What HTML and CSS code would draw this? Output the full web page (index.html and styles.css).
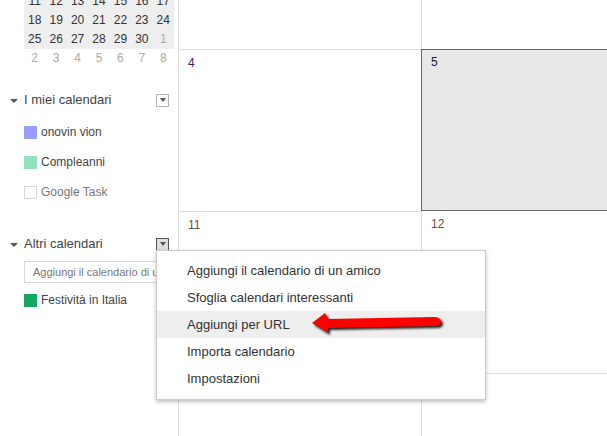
FILE: index.html
```html
<!DOCTYPE html>
<html lang="it">
<head>
<meta charset="utf-8">
<title>Calendario</title>
<link rel="stylesheet" href="styles.css">
</head>
<body>
<div class="app">
  <aside class="sidebar">
    <div class="mini">
      <div class="week in"><span>11</span><span>12</span><span>13</span><span>14</span><span>15</span><span>16</span><span>17</span></div>
      <div class="week in"><span>18</span><span>19</span><span>20</span><span>21</span><span>22</span><span>23</span><span>24</span></div>
      <div class="week in"><span>25</span><span>26</span><span>27</span><span>28</span><span>29</span><span>30</span><span class="out">1</span></div>
      <div class="week"><span class="out">2</span><span class="out">3</span><span class="out">4</span><span class="out">5</span><span class="out">6</span><span class="out">7</span><span class="out">8</span></div>
    </div>

    <section class="group first">
      <div class="group-head">
        <i class="caret"></i>
        <h2>I miei calendari</h2>
        <button class="drop" aria-label="Opzioni"><i class="drop-caret"></i></button>
      </div>
      <div class="cal-row"><i class="swatch blue"></i><span>onovin vion</span></div>
      <div class="cal-row"><i class="swatch green"></i><span>Compleanni</span></div>
      <div class="cal-row muted"><i class="swatch empty"></i><span>Google Task</span></div>
    </section>

    <section class="group second">
      <div class="group-head">
        <i class="caret"></i>
        <h2>Altri calendari</h2>
        <button class="drop active" aria-label="Opzioni"><i class="drop-caret"></i></button>
      </div>
      <input class="friend" type="text" placeholder="Aggiungi il calendario di un amico">
      <div class="cal-row holiday"><i class="swatch teal"></i><span>Festività in Italia</span></div>
    </section>
  </aside>

  <main class="month">
    <div class="cell"></div>
    <div class="cell"></div>
    <div class="cell"><span class="num purple">4</span></div>
    <div class="cell today"><span class="num dark">5</span></div>
    <div class="cell"><span class="num">11</span></div>
    <div class="cell after-today"><span class="num">12</span></div>
    <div class="cell"></div>
    <div class="cell"></div>
  </main>
</div>

<nav class="menu">
  <a>Aggiungi il calendario di un amico</a>
  <a>Sfoglia calendari interessanti</a>
  <a class="hover">Aggiungi per URL</a>
  <a>Importa calendario</a>
  <a>Impostazioni</a>
</nav>

<svg class="arrow" width="140" height="32" viewBox="0 0 140 32" aria-hidden="true">
  <defs>
    <filter id="blur" x="-10%" y="-40%" width="120%" height="180%"><feGaussianBlur stdDeviation="0.8"/></filter>
  </defs>
  <path class="arrow-shadow" filter="url(#blur)" d="M2 14 L15 4 L18 10 L125 8 Q131 8.500 131 13 Q131 17 125 17 L18 19 L18 24 Z"/>
  <path class="arrow-fill" d="M2 14 L15 4 L18 10 L125 8 Q131 8.500 131 13 Q131 17 125 17 L18 19 L18 24 Z"/>
</svg>
</body>
</html>
```
FILE: styles.css
```css
* { box-sizing: border-box; }

html, body {
  margin: 0;
  height: 100%;
  overflow: hidden;
  background: #fff;
}

body {
  position: relative;
  font-family: "Liberation Sans", Arial, sans-serif;
  font-size: 12px;
  color: #333;
}

.app {
  display: flex;
  height: 436px;
}

.sidebar {
  flex: 0 0 178px;
  overflow: hidden;
}

/* mini calendar */
.mini {
  margin: -8px 0 0 24px;
  width: 150px;
  font-size: 12px;
}

.week {
  display: grid;
  grid-template-columns: repeat(7, 1fr);
  height: 19px;
  line-height: 19px;
  text-align: center;
  color: #333;
}

.week.in { background: #eee; }
.out { color: #aaa; }

/* calendar groups */
.group-head {
  display: flex;
  align-items: center;
  height: 14px;
  padding-left: 10px;
}

.first { margin-top: 25px; }
.second { margin-top: 30px; }

.group-head h2 {
  margin: 0 0 0 6px;
  flex: 1;
  font-size: 13px;
  font-weight: 400;
  line-height: 14px;
  color: #444;
}

.caret {
  width: 0;
  height: 0;
  border-style: solid;
  border-color: #555 transparent transparent;
  border-width: 4px 4px 0;
  margin-top: 2px;
}

.drop {
  display: flex;
  align-items: center;
  justify-content: center;
  width: 13px;
  height: 13px;
  margin-right: 9px;
  padding: 0;
  background: #fff;
  border: 1px solid #b4b4b4;
}

.drop.active {
  background: #ddd;
  border-color: #555;
}

.drop-caret {
  width: 0;
  height: 0;
  border-style: solid;
  border-color: #555 transparent transparent;
  border-width: 4px 3.5px 0;
}

.cal-row {
  display: flex;
  align-items: center;
  height: 30px;
  padding-left: 24px;
  color: #444;
}

.group-head + .cal-row { margin-top: 10px; }

.cal-row.muted { color: #777; }

.swatch {
  flex: 0 0 13px;
  height: 13px;
  margin-right: 4px;
}

.blue { background: #9a9cff; }
.green { background: #92e1c0; }
.empty { background: #fff; border: 1px solid #d8d8d8; }
.teal { background: #16a765; }

.friend {
  display: block;
  width: 150px;
  height: 22px;
  margin: 10px 0 0 24px;
  padding: 0 8px;
  font: 11px "Liberation Sans", Arial, sans-serif;
  border: 1px solid #d9d9d9;
  border-radius: 0;
  outline: 0;
}

.friend::placeholder { color: #777; opacity: 1; }

.cal-row.holiday {
  height: 14px;
  margin-top: 10px;
}

/* month grid */
.month {
  flex: 1;
  display: grid;
  grid-template-columns: 243px 1fr;
  grid-template-rows: 49px 162px 162px 1fr;
}

.cell {
  padding: 6px 0 0 9px;
  border-left: 1px solid #ddd;
  border-top: 1px solid #ddd;
  color: #555;
}

.cell:nth-child(-n+2) { border-top: 0; }

.num { line-height: 14px; display: block; }
.purple { color: #4a1a6b; }
.dark { color: #222; margin-top: -1px; }

.today {
  background: #e8e8e8;
  border: 1px solid #666;
  border-right: 0;
}

.after-today { border-top: 0; }

/* dropdown menu */
.menu {
  position: absolute;
  left: 156px;
  top: 250px;
  width: 330px;
  padding: 6px 0 7px;
  background: #fff;
  border: 1px solid #ccc;
  box-shadow: 0 2px 4px rgba(0, 0, 0, .25);
  font-size: 13px;
}

.menu a {
  display: block;
  height: 27px;
  line-height: 27px;
  padding-left: 30px;
  color: #333;
}

.menu .hover { background: #eee; }

/* annotation */
.arrow {
  position: absolute;
  left: 310px;
  top: 309px;
}

.arrow-shadow { fill: #222; transform: translate(2px, 2px); }
.arrow-fill { fill: #f00; }
```
